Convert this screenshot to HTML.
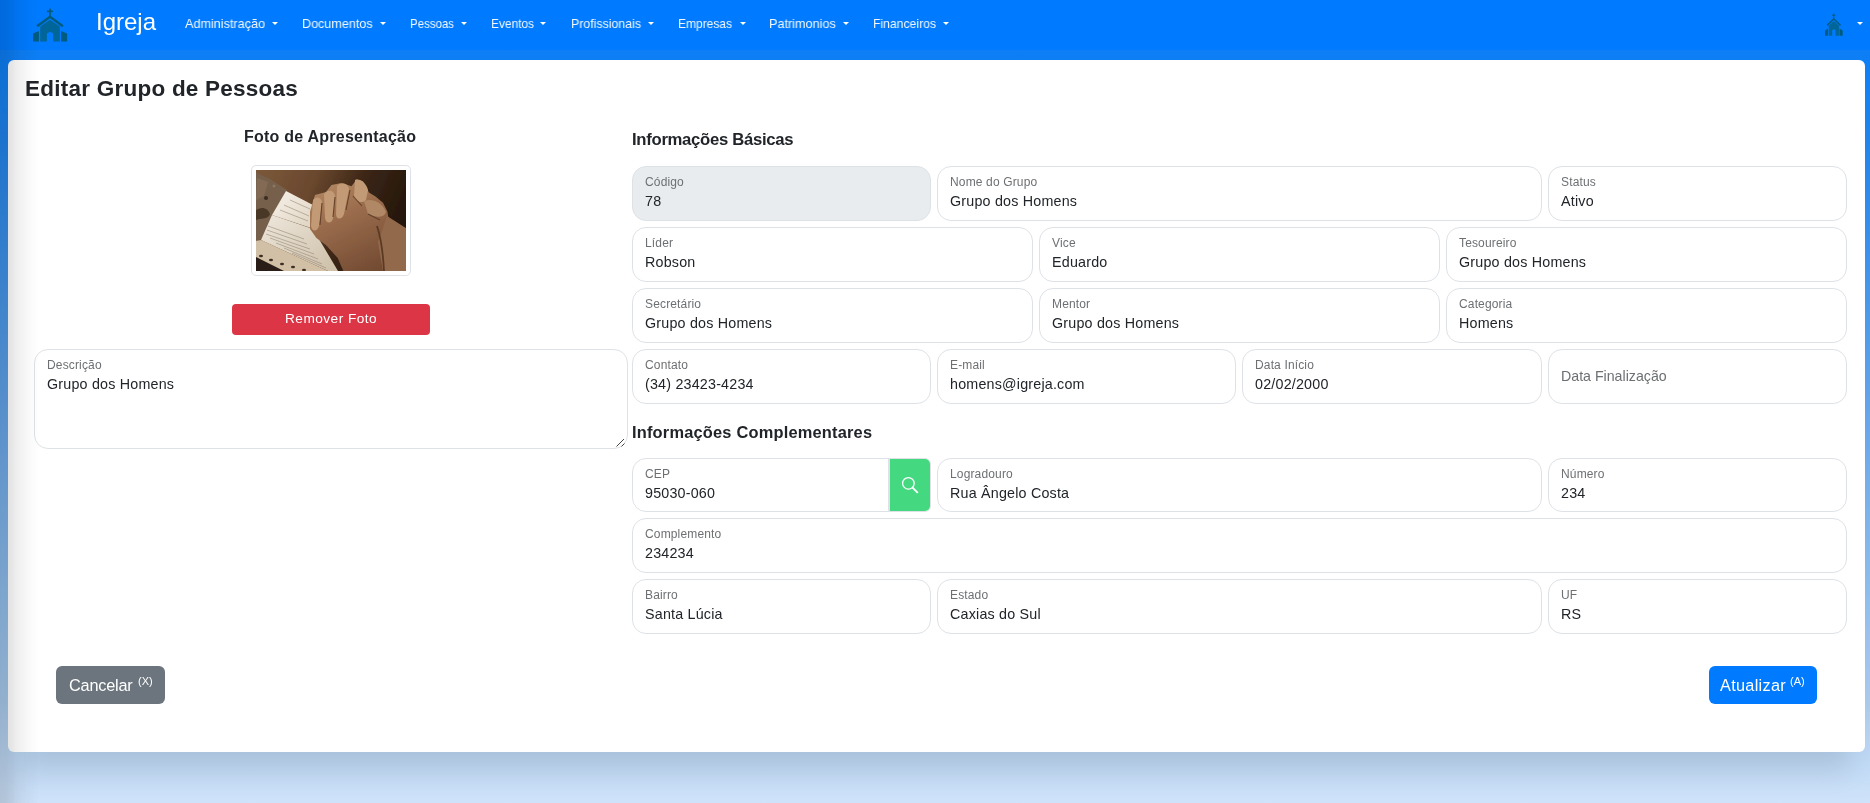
<!DOCTYPE html>
<html><head><meta charset="utf-8"><title>Editar Grupo de Pessoas</title>
<style>
html,body{margin:0;padding:0;width:1870px;height:803px;overflow:hidden}
body{position:relative;font-family:"Liberation Sans",sans-serif;
 background:linear-gradient(to bottom,rgb(12,125,246) 0px,rgb(13,126,245) 55px,rgb(36,135,237) 150px,rgb(99,165,235) 400px,rgb(147,192,237) 600px,rgb(170,203,238) 700px,rgb(207,227,250) 803px);}
.abs{position:absolute}
.t{position:absolute;line-height:1;white-space:pre;will-change:transform}
.fld{position:absolute;box-sizing:border-box;border:1px solid #dee2e6;border-radius:14px;background:#fff}
#nav{position:absolute;left:0;top:0;width:1870px;height:50px;background:#007bff}
#card{position:absolute;left:8px;top:60px;width:1857px;height:692px;background:#fff;border-radius:6px;box-shadow:0 34px 26px -15px rgba(0,0,0,.1)}
#csh{display:none;position:absolute;left:0;top:752px;width:1870px;height:51px;background:linear-gradient(to bottom,rgba(0,0,0,.10) 0px,rgba(0,0,0,.095) 3px,rgba(0,0,0,.075) 12px,rgba(0,0,0,.035) 25px,rgba(0,0,0,.01) 38px,rgba(0,0,0,0) 48px)}
#shade{position:absolute;left:0;top:0;width:40px;height:803px;background:linear-gradient(to right,rgba(0,0,0,.135) 0px,rgba(0,0,0,.125) 5px,rgba(0,0,0,.113) 8px,rgba(0,0,0,.09) 13px,rgba(0,0,0,.067) 16px,rgba(0,0,0,.043) 23px,rgba(0,0,0,.027) 28px,rgba(0,0,0,.012) 34px,rgba(0,0,0,0) 39px);pointer-events:none}
.btn{position:absolute;box-sizing:border-box;border-radius:6px}
</style></head><body>
<div id="nav"></div>
<svg class="abs" style="left:33px;top:7.5px" width="35.00" height="34.00" viewBox="33 7.5 35 34" preserveAspectRatio="none"><g fill="#005c7e"><rect x="49.2" y="8" width="1.7" height="7.5"/><rect x="46.9" y="10" width="6" height="1.7"/></g><polyline points="37.1,25.8 50,16.2 62.9,25.8" fill="none" stroke="#005c7e" stroke-width="2.5"/><g fill="#005c7e"><polygon points="33.1,33.1 38.9,30.4 38.9,40.9 33.1,40.9"/><polygon points="61.1,30.4 67.1,33.1 67.1,40.9 61.1,40.9"/></g><path fill="#006699" d="M40.2,25.9 L50,19.2 L59.9,25.9 L59.9,40.9 L53.2,40.9 L53.2,33.1 Q50,30 46.9,33.1 L46.9,40.9 L40.2,40.9 Z"/></svg>
<div class="t" style="left:95.50px;top:9.60px;font-size:24px;color:#fff;">Igreja</div>
<div class="t" style="left:185.20px;top:16.95px;font-size:13px;transform:scaleX(0.9709);transform-origin:0 0;color:rgba(255,255,255,.95);">Administração</div>
<div class="abs" style="left:272.00px;top:22.00px;width:0;height:0;border-left:3.00px solid transparent;border-right:3.00px solid transparent;border-top:3.00px solid #fff"></div>
<div class="t" style="left:302.20px;top:16.95px;font-size:13px;transform:scaleX(0.9671);transform-origin:0 0;color:rgba(255,255,255,.95);">Documentos</div>
<div class="abs" style="left:380.00px;top:22.00px;width:0;height:0;border-left:3.00px solid transparent;border-right:3.00px solid transparent;border-top:3.00px solid #fff"></div>
<div class="t" style="left:409.70px;top:16.95px;font-size:13px;transform:scaleX(0.8818);transform-origin:0 0;color:rgba(255,255,255,.95);">Pessoas</div>
<div class="abs" style="left:461.00px;top:22.00px;width:0;height:0;border-left:3.00px solid transparent;border-right:3.00px solid transparent;border-top:3.00px solid #fff"></div>
<div class="t" style="left:490.80px;top:16.95px;font-size:13px;transform:scaleX(0.9149);transform-origin:0 0;color:rgba(255,255,255,.95);">Eventos</div>
<div class="abs" style="left:540.00px;top:22.00px;width:0;height:0;border-left:3.00px solid transparent;border-right:3.00px solid transparent;border-top:3.00px solid #fff"></div>
<div class="t" style="left:571.10px;top:16.95px;font-size:13px;transform:scaleX(0.9498);transform-origin:0 0;color:rgba(255,255,255,.95);">Profissionais</div>
<div class="abs" style="left:648.00px;top:22.00px;width:0;height:0;border-left:3.00px solid transparent;border-right:3.00px solid transparent;border-top:3.00px solid #fff"></div>
<div class="t" style="left:678.20px;top:16.95px;font-size:13px;transform:scaleX(0.9231);transform-origin:0 0;color:rgba(255,255,255,.95);">Empresas</div>
<div class="abs" style="left:740.00px;top:22.00px;width:0;height:0;border-left:3.00px solid transparent;border-right:3.00px solid transparent;border-top:3.00px solid #fff"></div>
<div class="t" style="left:769.20px;top:16.95px;font-size:13px;transform:scaleX(0.9723);transform-origin:0 0;color:rgba(255,255,255,.95);">Patrimonios</div>
<div class="abs" style="left:843.00px;top:22.00px;width:0;height:0;border-left:3.00px solid transparent;border-right:3.00px solid transparent;border-top:3.00px solid #fff"></div>
<div class="t" style="left:873.20px;top:16.95px;font-size:13px;transform:scaleX(0.9375);transform-origin:0 0;color:rgba(255,255,255,.95);">Financeiros</div>
<div class="abs" style="left:943.00px;top:22.00px;width:0;height:0;border-left:3.00px solid transparent;border-right:3.00px solid transparent;border-top:3.00px solid #fff"></div>
<svg class="abs" style="left:1825.2px;top:12.66px" width="18.16" height="23.12" viewBox="33 7.5 35 34" preserveAspectRatio="none"><g fill="#005c7e"><rect x="49.2" y="8" width="1.7" height="7.5"/><rect x="46.9" y="10" width="6" height="1.7"/></g><polyline points="37.1,25.8 50,16.2 62.9,25.8" fill="none" stroke="#005c7e" stroke-width="2.5"/><g fill="#005c7e"><polygon points="33.1,33.1 38.9,30.4 38.9,40.9 33.1,40.9"/><polygon points="61.1,30.4 67.1,33.1 67.1,40.9 61.1,40.9"/></g><path fill="#006699" d="M40.2,25.9 L50,19.2 L59.9,25.9 L59.9,40.9 L53.2,40.9 L53.2,33.1 Q50,30 46.9,33.1 L46.9,40.9 L40.2,40.9 Z"/></svg>
<div class="abs" style="left:1857.00px;top:22.00px;width:0;height:0;border-left:3.00px solid transparent;border-right:3.00px solid transparent;border-top:3.00px solid #fff"></div>
<div id="csh"></div><div id="card"></div>
<div class="t" style="left:24.80px;top:77.67px;font-size:22.5px;font-weight:700;color:#212529;letter-spacing:0.24px;">Editar Grupo de Pessoas</div>
<div class="t" style="left:244.00px;top:129.00px;font-size:16px;font-weight:700;color:#212529;letter-spacing:0.24px;">Foto de Apresentação</div>
<div class="abs" style="left:251px;top:165px;width:160px;height:111px;box-sizing:border-box;border:1px solid #dee2e6;border-radius:5px;background:#fff"></div>
<svg class="abs" style="left:256px;top:170px" width="150" height="101" viewBox="0 0 150 101">
<defs>
<linearGradient id="bgG" x1="0" y1="0" x2="1" y2="0.3"><stop offset="0" stop-color="#7e5b3c"/><stop offset=".4" stop-color="#6a482e"/><stop offset=".68" stop-color="#3c2616"/><stop offset="1" stop-color="#24160c"/></linearGradient>
<linearGradient id="pgU" x1="0" y1="0" x2="1" y2="1"><stop offset="0" stop-color="#f6f1e8"/><stop offset="1" stop-color="#e0d4c2"/></linearGradient>
<linearGradient id="pgL" x1="0" y1="0" x2="1" y2="1"><stop offset="0" stop-color="#eee7dc"/><stop offset="1" stop-color="#cdbfa8"/></linearGradient>
<linearGradient id="hdG" x1="0" y1="0" x2="0.5" y2="1"><stop offset="0" stop-color="#b88e68"/><stop offset=".4" stop-color="#9c6e4e"/><stop offset="1" stop-color="#734b32"/></linearGradient>
<filter id="bl" x="-10%" y="-10%" width="120%" height="120%"><feGaussianBlur stdDeviation="0.7"/></filter>
</defs>
<g filter="url(#bl)">
<rect x="-6" y="-6" width="162" height="113" fill="url(#bgG)"/>
<polygon points="-6,0 14,9 31,20 16,45 7,68 -6,76" fill="#76604c"/>
<polygon points="1,8 12,12 8,26 0,30" fill="#866e58" opacity=".8"/>
<circle cx="10" cy="28" r="2" fill="#3a2c20"/><circle cx="18" cy="16" r="1.5" fill="#8a7764"/>
<path d="M0,40 C6,36 12,38 14,44 C12,50 4,48 0,50 Z" fill="#4a3828"/>
<polygon points="30,21 57,35 55,58 16,45" fill="url(#pgU)"/>
<polygon points="16,45 57,59 82,101 72,101 5,70" fill="url(#pgL)"/>
<polygon points="5,70 72,101 72,107 12,107 -6,92 -6,72" fill="#d2c0a6"/>
<polygon points="-6,84 -6,107 40,107" fill="#2a1e14"/>
<g fill="#3b2d22"><ellipse cx="5" cy="86" rx="2" ry="1.2"/><ellipse cx="15" cy="90" rx="2" ry="1.2"/><ellipse cx="26" cy="94" rx="2" ry="1.2"/><ellipse cx="37" cy="97" rx="2" ry="1.2"/><ellipse cx="48" cy="100" rx="2" ry="1.2"/></g>
<g stroke="#8a7a66" stroke-width="1" opacity=".5">
<path d="M12,56 L48,69 M11,60 L51,74 M10,64 L54,79 M14,68 L58,84 M20,73 L62,89 M28,78 L66,94 M36,83 L70,98"/>
<path d="M34,30 L54,39 M28,35 L53,46 M24,40 L52,51"/>
</g>
<polygon points="54,41.5 59,25 70,22 75.5,15 85.5,13 95.5,16.3 100.6,9.4 107,11.3 113,22.6 119.5,26.4 127,32.7 131.4,41.5 133.3,52.8 156,65.4 156,107 90,107 81.7,88 70.4,75.4 60.4,68 54,59" fill="url(#hdG)"/>
<polygon points="131,46 156,62 156,107 128,107 122,72" fill="#93694b"/>
<path d="M121,56 C125,68 127,82 128,101" stroke="#5a3a24" stroke-width="1.8" fill="none"/>
<g fill="#c29a74">
<path d="M57,30 C60,26 65,27 66,32 L63,56 C61,62 56,62 55,56 Z"/>
<path d="M68,24 C72,19 78,20 79,26 L77,48 C76,54 70,54 69,48 Z"/>
<path d="M81,16 C85,12 92,13 93,19 L88,44 C86,50 80,50 80,44 Z"/>
<path d="M99,10 C104,8 110,13 112,20 L110,30 C106,34 100,32 98,26 Z"/>
<path d="M108,31 C116,28 126,32 130,42 C128,48 120,48 112,44 Z" fill="#b08866"/>
</g>
<g stroke="#5e3c26" stroke-width="1.1" fill="none" opacity=".9">
<path d="M66,33 L64,55 M79,27 L77,47 M94,20 L90,40 M97,26 L106,36 M112,44 L124,50"/>
</g>
</g>
</svg>
<div class="btn" style="left:232px;top:304px;width:198px;height:31px;background:#dc3545;border-radius:4px"></div>
<div class="t" style="left:285.00px;top:312.06px;font-size:13.7px;color:#fff;letter-spacing:0.45px;">Remover Foto</div>
<div class="fld" style="left:34px;top:349px;width:594px;height:100px;"></div>
<div class="t" style="left:47.00px;top:359.40px;font-size:12px;color:#6d7073;letter-spacing:0.15px;">Descrição</div>
<div class="t" style="left:47.00px;top:377.45px;font-size:14.3px;color:#212529;letter-spacing:0.2px;">Grupo dos Homens</div>
<svg class="abs" style="left:615px;top:437px" width="12" height="11" viewBox="0 0 12 11"><path d="M1.5,9.5 L9,2 M6.5,9.5 L9.5,6.5" stroke="#444" stroke-width="1" fill="none"/></svg>
<div class="t" style="left:632.00px;top:131.71px;font-size:16.7px;font-weight:700;color:#212529;letter-spacing:-0.3px;">Informações Básicas</div>
<div class="t" style="left:632.00px;top:423.96px;font-size:16.4px;font-weight:700;color:#212529;letter-spacing:0.2px;">Informações Complementares</div>
<div class="fld" style="left:632px;top:166px;width:299px;height:55px;background:#e9ecef;"></div>
<div class="t" style="left:645.00px;top:175.50px;font-size:12px;color:#6d7073;letter-spacing:0.15px;">Código</div>
<div class="t" style="left:645.00px;top:193.65px;font-size:14.3px;color:#212529;letter-spacing:0.2px;">78</div>
<div class="fld" style="left:937px;top:166px;width:605px;height:55px;"></div>
<div class="t" style="left:950.00px;top:175.50px;font-size:12px;color:#6d7073;letter-spacing:0.15px;">Nome do Grupo</div>
<div class="t" style="left:950.00px;top:193.65px;font-size:14.3px;color:#212529;letter-spacing:0.2px;">Grupo dos Homens</div>
<div class="fld" style="left:1548px;top:166px;width:299px;height:55px;"></div>
<div class="t" style="left:1561.00px;top:175.50px;font-size:12px;color:#6d7073;letter-spacing:0.15px;">Status</div>
<div class="t" style="left:1561.00px;top:193.65px;font-size:14.3px;color:#212529;letter-spacing:0.2px;">Ativo</div>
<div class="fld" style="left:632px;top:227px;width:401px;height:55px;"></div>
<div class="t" style="left:645.00px;top:236.50px;font-size:12px;color:#6d7073;letter-spacing:0.15px;">Líder</div>
<div class="t" style="left:645.00px;top:254.65px;font-size:14.3px;color:#212529;letter-spacing:0.2px;">Robson</div>
<div class="fld" style="left:1039px;top:227px;width:401px;height:55px;"></div>
<div class="t" style="left:1052.00px;top:236.50px;font-size:12px;color:#6d7073;letter-spacing:0.15px;">Vice</div>
<div class="t" style="left:1052.00px;top:254.65px;font-size:14.3px;color:#212529;letter-spacing:0.2px;">Eduardo</div>
<div class="fld" style="left:1446px;top:227px;width:401px;height:55px;"></div>
<div class="t" style="left:1459.00px;top:236.50px;font-size:12px;color:#6d7073;letter-spacing:0.15px;">Tesoureiro</div>
<div class="t" style="left:1459.00px;top:254.65px;font-size:14.3px;color:#212529;letter-spacing:0.2px;">Grupo dos Homens</div>
<div class="fld" style="left:632px;top:288px;width:401px;height:55px;"></div>
<div class="t" style="left:645.00px;top:297.50px;font-size:12px;color:#6d7073;letter-spacing:0.15px;">Secretário</div>
<div class="t" style="left:645.00px;top:315.64px;font-size:14.3px;color:#212529;letter-spacing:0.2px;">Grupo dos Homens</div>
<div class="fld" style="left:1039px;top:288px;width:401px;height:55px;"></div>
<div class="t" style="left:1052.00px;top:297.50px;font-size:12px;color:#6d7073;letter-spacing:0.15px;">Mentor</div>
<div class="t" style="left:1052.00px;top:315.64px;font-size:14.3px;color:#212529;letter-spacing:0.2px;">Grupo dos Homens</div>
<div class="fld" style="left:1446px;top:288px;width:401px;height:55px;"></div>
<div class="t" style="left:1459.00px;top:297.50px;font-size:12px;color:#6d7073;letter-spacing:0.15px;">Categoria</div>
<div class="t" style="left:1459.00px;top:315.64px;font-size:14.3px;color:#212529;letter-spacing:0.2px;">Homens</div>
<div class="fld" style="left:632px;top:349px;width:299px;height:55px;"></div>
<div class="t" style="left:645.00px;top:358.50px;font-size:12px;color:#6d7073;letter-spacing:0.15px;">Contato</div>
<div class="t" style="left:645.00px;top:376.64px;font-size:14.3px;color:#212529;letter-spacing:0.2px;">(34) 23423-4234</div>
<div class="fld" style="left:937px;top:349px;width:299px;height:55px;"></div>
<div class="t" style="left:950.00px;top:358.50px;font-size:12px;color:#6d7073;letter-spacing:0.15px;">E-mail</div>
<div class="t" style="left:950.00px;top:376.64px;font-size:14.3px;color:#212529;letter-spacing:0.2px;">homens@igreja.com</div>
<div class="fld" style="left:1242px;top:349px;width:300px;height:55px;"></div>
<div class="t" style="left:1255.00px;top:358.50px;font-size:12px;color:#6d7073;letter-spacing:0.15px;">Data Início</div>
<div class="t" style="left:1255.00px;top:376.64px;font-size:14.3px;color:#212529;letter-spacing:0.2px;">02/02/2000</div>
<div class="fld" style="left:1548px;top:349px;width:299px;height:55px;"></div>
<div class="t" style="left:1561.00px;top:368.73px;font-size:14.2px;color:#6d7073;">Data Finalização</div>
<div class="fld" style="left:632px;top:458px;width:299px;height:54px;background:#fff;border-radius:14px 6px 6px 14px;"></div>
<div class="t" style="left:645.00px;top:467.50px;font-size:12px;color:#6d7073;letter-spacing:0.15px;">CEP</div>
<div class="t" style="left:645.00px;top:485.64px;font-size:14.3px;color:#212529;letter-spacing:0.2px;">95030-060</div>
<div class="abs" style="left:888px;top:458px;width:2px;height:54px;background:#dee2e6"></div>
<div class="abs" style="left:890px;top:459px;width:40px;height:52px;background:#44d880;border-radius:0 5px 5px 0"></div>
<svg class="abs" style="left:899px;top:474px" width="22" height="22" viewBox="0 0 22 22"><circle cx="9.4" cy="9.3" r="5.8" stroke="#fff" stroke-width="1.25" fill="none"/><path d="M13.6,13.6 L18.3,18.3" stroke="#fff" stroke-width="1.9" stroke-linecap="round"/></svg>
<div class="fld" style="left:937px;top:458px;width:605px;height:54px;"></div>
<div class="t" style="left:950.00px;top:467.50px;font-size:12px;color:#6d7073;letter-spacing:0.15px;">Logradouro</div>
<div class="t" style="left:950.00px;top:485.64px;font-size:14.3px;color:#212529;letter-spacing:0.2px;">Rua Ângelo Costa</div>
<div class="fld" style="left:1548px;top:458px;width:299px;height:54px;"></div>
<div class="t" style="left:1561.00px;top:467.50px;font-size:12px;color:#6d7073;letter-spacing:0.15px;">Número</div>
<div class="t" style="left:1561.00px;top:485.64px;font-size:14.3px;color:#212529;letter-spacing:0.2px;">234</div>
<div class="fld" style="left:632px;top:518px;width:1215px;height:55px;"></div>
<div class="t" style="left:645.00px;top:527.50px;font-size:12px;color:#6d7073;letter-spacing:0.15px;">Complemento</div>
<div class="t" style="left:645.00px;top:545.64px;font-size:14.3px;color:#212529;letter-spacing:0.2px;">234234</div>
<div class="fld" style="left:632px;top:579px;width:299px;height:55px;"></div>
<div class="t" style="left:645.00px;top:588.50px;font-size:12px;color:#6d7073;letter-spacing:0.15px;">Bairro</div>
<div class="t" style="left:645.00px;top:606.64px;font-size:14.3px;color:#212529;letter-spacing:0.2px;">Santa Lúcia</div>
<div class="fld" style="left:937px;top:579px;width:605px;height:55px;"></div>
<div class="t" style="left:950.00px;top:588.50px;font-size:12px;color:#6d7073;letter-spacing:0.15px;">Estado</div>
<div class="t" style="left:950.00px;top:606.64px;font-size:14.3px;color:#212529;letter-spacing:0.2px;">Caxias do Sul</div>
<div class="fld" style="left:1548px;top:579px;width:299px;height:55px;"></div>
<div class="t" style="left:1561.00px;top:588.50px;font-size:12px;color:#6d7073;letter-spacing:0.15px;">UF</div>
<div class="t" style="left:1561.00px;top:606.64px;font-size:14.3px;color:#212529;letter-spacing:0.2px;">RS</div>
<div class="btn" style="left:56px;top:666px;width:109px;height:38px;background:#6c757d"></div>
<div class="t" style="left:69.00px;top:677.25px;font-size:16.3px;color:#fff;letter-spacing:-0.2px;">Cancelar</div>
<div class="t" style="left:138.00px;top:676.15px;font-size:11px;color:#fff;">(X)</div>
<div class="btn" style="left:1709px;top:666px;width:108px;height:38px;background:#007bff"></div>
<div class="t" style="left:1720.00px;top:677.25px;font-size:16.3px;color:#fff;letter-spacing:0.3px;">Atualizar</div>
<div class="t" style="left:1790.00px;top:676.15px;font-size:11px;color:#fff;">(A)</div>
<div id="shade"></div>
</body></html>
